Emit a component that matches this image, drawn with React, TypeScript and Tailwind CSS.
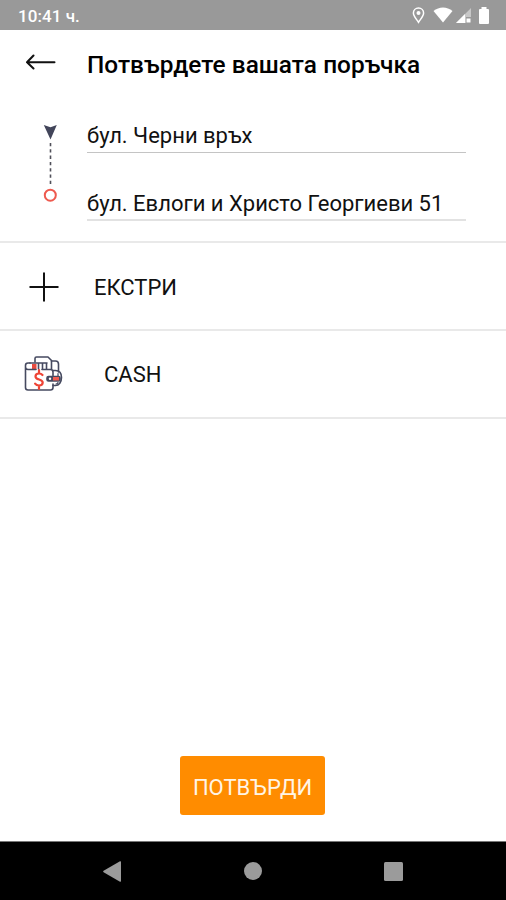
import React from "react";

const StatusBar: React.FC = () => (
  <div className="h-[30px] shrink-0 bg-[#999999] flex items-center justify-between pl-[18px] pr-[16px] text-white">
    <span className="text-[17px] leading-none font-medium tracking-[0.05px] mt-[2px]">10:41 ч.</span>
    <div className="flex items-center">
      <svg className="w-[13px] h-[17px] mr-[8px]" viewBox="0 0 13 17" fill="none" stroke="currentColor">
        <path d="M6.500 1C3.600 1 1.400 3.200 1.400 6c0 3.300 3.300 6.300 5.100 9.300C8.300 12.300 11.600 9.300 11.600 6c0-2.800-2.200-5-5.100-5z" strokeWidth="1.500" />
        <circle cx="6.500" cy="6" r="2" fill="currentColor" stroke="none" />
      </svg>
      <svg className="w-[20px] h-[16px] mr-[3px]" viewBox="0 0 20 16" fill="currentColor">
        <path d="M.5 4C3.300 1.700 6.500.500 10 .500s6.700 1.200 9.500 3.500L10 15.500z" />
      </svg>
      <svg className="w-[15px] h-[16px] mr-[7px]" viewBox="0 0 15 16" fill="currentColor">
        <path d="M15 1v9h-5v6H0z" opacity="0.45" />
        <path d="M9 7v9H0z" />
        <path d="M10.500 11.500h4v4h-4z" />
      </svg>
      <svg className="w-[12px] h-[17px]" viewBox="0 0 12 17" fill="currentColor">
        <path d="M3.500 0h5v2H10a1 1 0 0 1 1 1v13a1 1 0 0 1-1 1H2a1 1 0 0 1-1-1V3a1 1 0 0 1 1-1h1.500z" />
      </svg>
    </div>
  </div>
);

const RouteMarker: React.FC = () => (
  <svg className="w-[14px] h-[80px] ml-[43px] mt-[4px] shrink-0" viewBox="0 0 14 80" fill="none">
    <path d="M.8 1L7.500 3.300 13.800 1 7.500 15.500z" fill="#42455a" />
    <path d="M7.500 19v43" stroke="#50505a" strokeWidth="1.600" strokeDasharray="3.300 3" />
    <circle cx="7.300" cy="71.200" r="5.500" stroke="#ee5a4f" strokeWidth="2" />
  </svg>
);

const WalletIcon: React.FC = () => (
  <svg className="w-[40px] h-[38px]" viewBox="0 0 40 38" fill="none" stroke="#464a60" strokeWidth="1.600" strokeLinejoin="round" strokeLinecap="round">
    {/* bills */}
    <path d="M11 7V3.500A1.500 1.500 0 0 1 12.500 2H24l3.500 3.500V14" />
    <path d="M27.500 6h4a3 3 0 0 1 3 3v8" />
    <path d="M6 8h17M14.500 8v6M18.500 8v6M22.500 8v6" />
    <path d="M8 9h4.500v5H8z" fill="#e84b40" stroke="none" />
    {/* wallet */}
    <path d="M6 8H4a2.500 2.500 0 0 0-2.500 2.500v22A2.500 2.500 0 0 0 4 35h22.500a2.500 2.500 0 0 0 2.500-2.500V29M1.500 12A2.500 2.500 0 0 0 4 14.500h8M18 14.500h8.500A2.500 2.500 0 0 1 29 17v3.500" />
    {/* strap */}
    <path d="M29 15.500h2.500c3.500 0 6 2.500 6 7s-2.500 8-6 8H29" />
    <path d="M34 18.500v3M34 27.500c-.3 1-1 1.500-2 1.500" strokeWidth="1.200" />
    <rect x="23" y="21.500" width="13" height="4.500" rx="1.500" fill="#464a60" />
    <path d="M29 22h6v3.500h-6z" fill="#ef5b50" stroke="none" />
    <circle cx="26" cy="23.700" r="1.200" fill="#fff" stroke="none" />
    {/* dollar */}
    <path d="M18.500 20c-1-1.200-2.200-1.500-3.500-1.500-2 0-3.500 1.200-3.500 2.900 0 4 7.200 2.200 7.200 6.100 0 1.800-1.500 3-3.700 3-1.500 0-3-.600-3.900-1.900M15 15v3.500M15 30.500v3.500" stroke="#ee4436" strokeWidth="2.200" />
  </svg>
);

const NavBar: React.FC = () => (
  <div className="h-[59px] shrink-0 bg-black border-t border-[#777777] flex items-center pl-[103px] text-[#9b9b9b]">
    <svg className="w-[18px] h-[21px]" viewBox="0 0 18 21" fill="currentColor">
      <path d="M17 .3c.6-.300 1 0 1 .600v19.200c0 .600-.400.900-1 .600L.600 11.200c-.600-.400-.600-1 0-1.400z" />
    </svg>
    <div className="w-[18px] h-[18px] rounded-full bg-[#9b9b9b] ml-[123px]" />
    <div className="w-[19px] h-[19px] rounded-[1.500px] bg-[#9b9b9b] ml-[122px]" />
  </div>
);

const App: React.FC = () => {
  return (
    <div className="w-[506px] h-[900px] bg-white text-[#111111] font-['Roboto',sans-serif] flex flex-col overflow-hidden">
      <StatusBar />

      {/* Header */}
      <div className="h-[90px] shrink-0 flex items-start">
        <svg className="w-[30px] h-[16px] ml-[26px] mt-[24px]" viewBox="0 0 30 16" fill="none" stroke="#111111" strokeWidth="2" strokeLinecap="round" strokeLinejoin="round">
          <path d="M7.500 1.500L1 8.300l6.500 6.200M1 8.300h27.500" />
        </svg>
        <h1 className="ml-[31px] mt-[21px] text-[24.4px] leading-[28px] font-medium tracking-[0.04px] text-black whitespace-nowrap">
          Потвърдете вашата поръчка
        </h1>
      </div>

      {/* Route */}
      <div className="h-[123px] shrink-0 flex items-start border-b-2 border-[#e9e9e9]">
        <RouteMarker />
        <div className="ml-[30px] w-[379px] text-[22px] leading-[32px] whitespace-nowrap">
          <div className="h-[33px] border-b border-[#c4c4c4]">бул. Черни връх</div>
          <div className="h-[68px] pt-[35px] border-b-2 border-[#e2e2e2]">бул. Евлоги и Христо Георгиеви 51</div>
        </div>
      </div>

      {/* Options */}
      <button className="h-[88px] shrink-0 flex items-center pl-[29px] border-b-2 border-[#e9e9e9]">
        <svg className="w-[30px] h-[30px] mt-[2px]" viewBox="0 0 30 30" fill="none" stroke="#111111" strokeWidth="2">
          <path d="M15 .5v29M.5 15h29" />
        </svg>
        <span className="ml-[35px] mt-[2px] text-[22px]">ЕКСТРИ</span>
      </button>
      <button className="h-[88px] shrink-0 flex items-center pl-[24px] border-b-2 border-[#e9e9e9]">
        <WalletIcon />
        <span className="ml-[40px] text-[22px]">CASH</span>
      </button>

      <div className="flex-1 flex flex-col items-center justify-end pb-[26px]">
        <button className="w-[145px] h-[59px] rounded-[3px] bg-[#ff8c00] text-[#fff5e6] text-[22px] pt-[3px] mr-[1px]">
          ПОТВЪРДИ
        </button>
      </div>

      <NavBar />
    </div>
  );
};

export default App;
